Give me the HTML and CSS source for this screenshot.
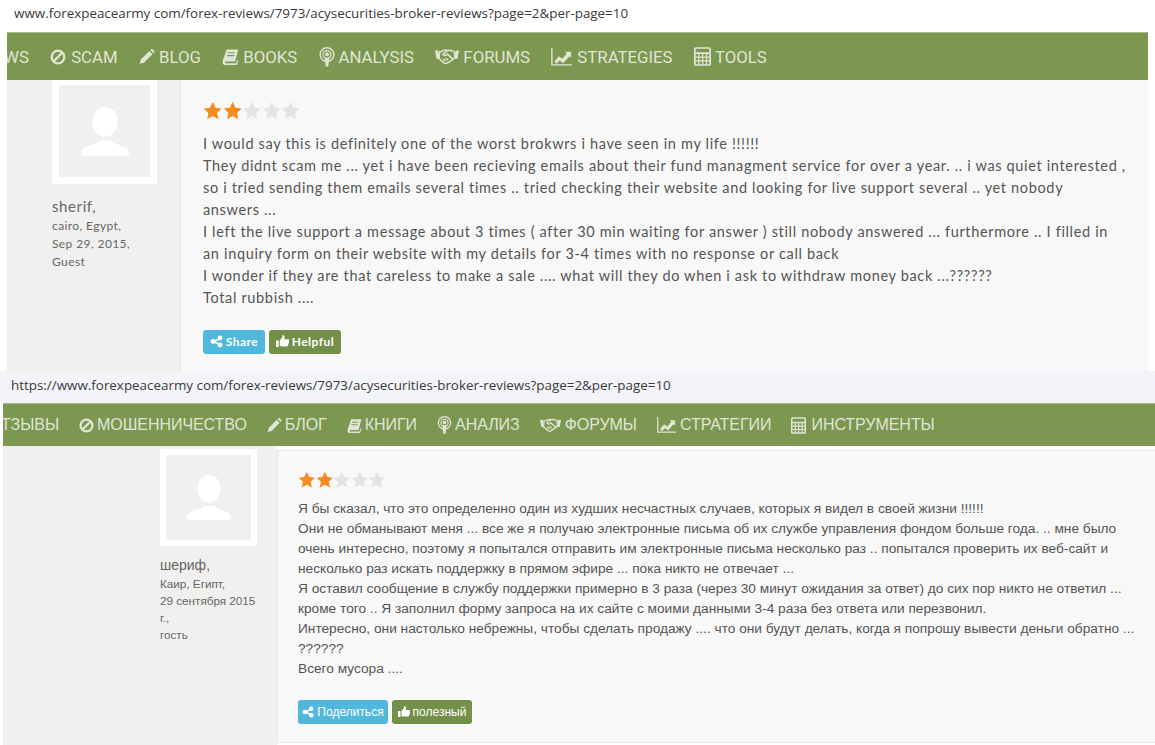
FILE: index.html
```html
<!DOCTYPE html>
<html lang="en">
<head>
  <meta charset="UTF-8" />
  <meta name="viewport" content="width=device-width, initial-scale=1.0"/>
  <title>Review screenshots</title>
  <link rel="stylesheet" href="styles.css">
</head>
<body>

  <!-- Icon set -->
  <svg class="icon-defs" width="0" height="0">
    <symbol id="i-ban" viewBox="0 0 24 24"><circle cx="12" cy="12" r="9.5" fill="none" stroke="currentColor" stroke-width="3.6"/><path d="M6 18 18 6" stroke="currentColor" stroke-width="3.6"/></symbol>
    <symbol id="i-pencil" viewBox="0 0 24 24"><path d="M1 23l1.6-6.4L15.5 3.7l4.8 4.8L7.4 21.4zM17 2.2l1.2-1.1c.6-.5 1.4-.5 2 0l2.700 2.700c.5.6.5 1.400 0 2L21.800 7z" fill="currentColor"/></symbol>
    <symbol id="i-book" viewBox="0 0 24 24"><path d="M6.500 2H23l-4.500 17H5.500c-1.500 0-1.500 2.500 0 2.500H20l1.500-5 1.500.8L21 24H4c-2.800 0-3.800-2.800-3-5.500zM8.500 6l-.4 1.500h10l.4-1.500zM7.300 10l-.4 1.500h10l.4-1.500z" fill="currentColor" fill-rule="evenodd"/></symbol>
    <symbol id="i-podcast" viewBox="0 0 20 25"><circle cx="10" cy="9.500" r="8.600" fill="none" stroke="currentColor" stroke-width="1.800"/><circle cx="10" cy="9.500" r="5" fill="none" stroke="currentColor" stroke-width="1.600"/><circle cx="10" cy="9" r="2.500" fill="currentColor"/><path d="M7.200 13h5.600l-1.200 11.500H8.400z" fill="currentColor"/></symbol>
    <symbol id="i-handshake" viewBox="0 0 32 22"><path d="M0 3h4.500l1.500 11H2zM27.500 3H32l-2 11h-4z" fill="currentColor"/><path d="M6 5c3 0 5-3 9-2.500L17 3c3-1 6 0 9 2l.5 8-9.500 6.500c-2 1.200-3.500 1-5 0L5.500 14z" fill="none" stroke="currentColor" stroke-width="2"/><path d="M16 3.500l-5.500 4.500c2 2.500 4 2 6-.2l7.500 6.700M14 17l-3-3M17.500 16l-3-3" fill="none" stroke="currentColor" stroke-width="2"/></symbol>
    <symbol id="i-chart" viewBox="0 0 24 20"><path d="M1 0v19h23" fill="none" stroke="currentColor" stroke-width="1.600"/><path d="M4 15l5-6 4 3 5-6-2-2h7v7l-2-2-7 8-4-3-4 4z" fill="currentColor"/></symbol>
    <symbol id="i-calc" viewBox="0 0 20 22"><path d="M2 0h16a2 2 0 0 1 2 2v18a2 2 0 0 1-2 2H2a2 2 0 0 1-2-2V2a2 2 0 0 1 2-2zM2 2v4h16V2zM2 8v3h3V8zm4.500 0v3h3V8zm4.500 0v3h3V8zm4.500 0v3H18V8zM2 12.500v3h3v-3zm4.500 0v3h3v-3zm4.500 0v3h3v-3zm4.500 0v3H18v-3zM2 17v3h3v-3zm4.500 0v3h3v-3zm4.500 0v3h3v-3zm4.500 0v3H18v-3z" fill="currentColor" fill-rule="evenodd"/></symbol>
    <symbol id="i-share" viewBox="0 0 24 24"><path d="M18 7 6 12l12 5" fill="none" stroke="currentColor" stroke-width="2.800"/><circle cx="18.500" cy="5.500" r="4.500" fill="currentColor"/><circle cx="5.500" cy="12" r="4.500" fill="currentColor"/><circle cx="18.500" cy="18.500" r="4.500" fill="currentColor"/></symbol>
    <symbol id="i-thumb" viewBox="0 0 24 24"><path d="M0 10h5v12H0zM7 10l4-5c1-1 1-3 1-5 3 0 4 2 4 4l-1 4h7c2 0 2.500 2 1.500 3 1 1 .8 2.800-.3 3.400.6 1.200.2 2.600-1 3.200.4 1.400-.4 3.400-2.200 3.400H11c-2 0-3-1-4-1z" fill="currentColor"/></symbol>
    <symbol id="i-star" viewBox="0 0 24 24"><path d="M12 1l3.400 7.300 7.600.9-5.600 5.400 1.500 7.900L12 18.600l-6.900 3.900 1.500-7.900L1 9.200l7.600-.9z" fill="currentColor"/></symbol>
    <symbol id="i-user" viewBox="0 0 52 52"><ellipse cx="26" cy="15.500" rx="13" ry="15.500" fill="currentColor"/><path d="M1 49c0-6 5-8 12-10 4-1 6-2 6-4h14c0 2 2 3 6 4 7 2 12 4 12 10 0 1-1 2-3 2H4c-2 0-3-1-3-2z" fill="currentColor"/></symbol>
  </svg>

  <!-- English page -->
  <section class="shot shot-en">
    <div class="url-bar">www.forexpeacearmy com/forex-reviews/7973/acysecurities-broker-reviews?page=2&amp;per-page=10</div>
    <nav class="menu">
      <a class="menu-item"><span class="cut">WS</span></a>
      <a class="menu-item"><svg class="ico ico-ban"><use href="#i-ban"/></svg>SCAM</a>
      <a class="menu-item"><svg class="ico ico-pencil"><use href="#i-pencil"/></svg>BLOG</a>
      <a class="menu-item"><svg class="ico ico-book"><use href="#i-book"/></svg>BOOKS</a>
      <a class="menu-item"><svg class="ico ico-podcast"><use href="#i-podcast"/></svg>ANALYSIS</a>
      <a class="menu-item"><svg class="ico ico-hand"><use href="#i-handshake"/></svg>FORUMS</a>
      <a class="menu-item"><svg class="ico ico-chart"><use href="#i-chart"/></svg>STRATEGIES</a>
      <a class="menu-item"><svg class="ico ico-calc"><use href="#i-calc"/></svg>TOOLS</a>
    </nav>
    <div class="review">
      <aside class="author">
        <div class="avatar"><svg class="avatar-img"><use href="#i-user"/></svg></div>
        <div class="author-name">sherif,</div>
        <div class="author-meta">cairo, Egypt,<br>Sep 29, 2015,<br>Guest</div>
      </aside>
      <div class="review-body">
        <div class="stars">
          <svg class="star on"><use href="#i-star"/></svg><svg class="star on"><use href="#i-star"/></svg><svg class="star"><use href="#i-star"/></svg><svg class="star"><use href="#i-star"/></svg><svg class="star"><use href="#i-star"/></svg>
        </div>
        <p class="review-text">I would say this is definitely one of the worst brokwrs i have seen in my life !!!!!!<br>
They didnt scam me ... yet i have been recieving emails about their fund managment service for over a year. .. i was quiet interested ,<br>
so i tried sending them emails several times .. tried checking their website and looking for live support several .. yet nobody<br>
answers ...<br>
I left the live support a message about 3 times ( after 30 min waiting for answer ) still nobody answered ... furthermore .. I filled in<br>
an inquiry form on their website with my details for 3-4 times with no response or call back<br>
I wonder if they are that careless to make a sale .... what will they do when i ask to withdraw money back ...??????<br>
Total rubbish ....</p>
        <div class="actions">
          <a class="btn btn-share"><svg class="btn-ico"><use href="#i-share"/></svg>Share</a>
          <a class="btn btn-help"><svg class="btn-ico"><use href="#i-thumb"/></svg>Helpful</a>
        </div>
      </div>
    </div>
  </section>

  <!-- Russian page -->
  <section class="shot shot-ru">
    <div class="url-bar">https://www.forexpeacearmy com/forex-reviews/7973/acysecurities-broker-reviews?page=2&amp;per-page=10</div>
    <nav class="menu">
      <a class="menu-item"><span class="cut">ТЗЫВЫ</span></a>
      <a class="menu-item"><svg class="ico ico-ban"><use href="#i-ban"/></svg>МОШЕННИЧЕСТВО</a>
      <a class="menu-item"><svg class="ico ico-pencil"><use href="#i-pencil"/></svg>БЛОГ</a>
      <a class="menu-item"><svg class="ico ico-book"><use href="#i-book"/></svg>КНИГИ</a>
      <a class="menu-item"><svg class="ico ico-podcast"><use href="#i-podcast"/></svg>АНАЛИЗ</a>
      <a class="menu-item"><svg class="ico ico-hand"><use href="#i-handshake"/></svg>ФОРУМЫ</a>
      <a class="menu-item"><svg class="ico ico-chart"><use href="#i-chart"/></svg>СТРАТЕГИИ</a>
      <a class="menu-item"><svg class="ico ico-calc"><use href="#i-calc"/></svg>ИНСТРУМЕНТЫ</a>
    </nav>
    <div class="review">
      <aside class="author">
        <div class="avatar"><svg class="avatar-img"><use href="#i-user"/></svg></div>
        <div class="author-name">шериф,</div>
        <div class="author-meta">Каир, Египт,<br>29 сентября 2015<br>г.,<br>гость</div>
      </aside>
      <div class="review-body">
        <div class="stars">
          <svg class="star on"><use href="#i-star"/></svg><svg class="star on"><use href="#i-star"/></svg><svg class="star"><use href="#i-star"/></svg><svg class="star"><use href="#i-star"/></svg><svg class="star"><use href="#i-star"/></svg>
        </div>
        <p class="review-text">Я бы сказал, что это определенно один из худших несчастных случаев, которых я видел в своей жизни !!!!!!<br>
Они не обманывают меня ... все же я получаю электронные письма об их службе управления фондом больше года. .. мне было<br>
очень интересно, поэтому я попытался отправить им электронные письма несколько раз .. попытался проверить их веб-сайт и<br>
несколько раз искать поддержку в прямом эфире ... пока никто не отвечает ...<br>
Я оставил сообщение в службу поддержки примерно в 3 раза (через 30 минут ожидания за ответ) до сих пор никто не ответил ...<br>
кроме того .. Я заполнил форму запроса на их сайте с моими данными 3-4 раза без ответа или перезвонил.<br>
Интересно, они настолько небрежны, чтобы сделать продажу .... что они будут делать, когда я попрошу вывести деньги обратно ...<br>
??????<br>
Всего мусора ....</p>
        <div class="actions">
          <a class="btn btn-share"><svg class="btn-ico"><use href="#i-share"/></svg>Поделиться</a>
          <a class="btn btn-help"><svg class="btn-ico"><use href="#i-thumb"/></svg>полезный</a>
        </div>
      </div>
    </div>
  </section>

</body>
</html>
```

FILE: styles.css
```css
html, body {
  margin: 0;
  padding: 0;
  background-color: white;
}

body {
  width: 1155px;
  height: 745px;
  overflow: hidden;
}

.icon-defs {
  display: block;
  height: 0;
}

.shot {
  overflow: hidden;
}

.url-bar {
  white-space: nowrap;
  color: #333;
}

.menu {
  display: flex;
  align-items: center;
  background-color: #7b9750;
  border-top: 1px solid #a8bb8f;
  box-sizing: border-box;
  overflow: hidden;
  color: #e0e5d6;
  white-space: nowrap;
}

.menu-item {
  display: flex;
  align-items: center;
  flex: none;
}

.ico {
  flex: none;
  fill: currentColor;
}

.review {
  display: flex;
}

.author {
  flex: none;
  box-sizing: border-box;
  background-color: #f1f0ee;
  color: #666;
}

.avatar {
  display: flex;
  align-items: center;
  justify-content: center;
  background-color: #f1f0ee;
  border-style: solid;
  border-color: white;
  box-sizing: border-box;
  color: white;
}

.review-body {
  flex: 1;
  background-color: #f8f8f8;
  box-sizing: border-box;
}

.stars {
  display: flex;
}

.star {
  color: #e3e4e4;
  flex: none;
}

.star.on {
  color: #f68b1f;
}

.review-text {
  margin: 0;
  white-space: nowrap;
  color: #555;
}

.actions {
  display: flex;
  gap: 4px;
}

.btn {
  display: flex;
  align-items: center;
  justify-content: center;
  height: 24px;
  box-sizing: border-box;
  border-radius: 3px;
  color: white;
  white-space: nowrap;
}

.btn-share {
  background-color: #4fb8dc;
}

.btn-help {
  background-color: #738f48;
}

.btn-ico {
  flex: none;
  fill: currentColor;
}

/* English shot */
.shot-en {
  height: 371px;
}

.shot-en .url-bar {
  height: 32px;
  padding: 4px 0 0 14px;
  box-sizing: border-box;
  font-family: "Open Sans", sans-serif;
  font-size: 13.400px;
  line-height: 18px;
  color: #3a3a3a;
}

.shot-en .menu,
.shot-en .review {
  margin: 0 7px;
}

.shot-en .menu {
  height: 48px;
  font-family: Roboto, sans-serif;
  font-size: 16.800px;
}

.shot-en .menu-item {
  margin-right: 21.300px;
}

.shot-en .cut {
  margin-left: -3px;
}

.shot-en .ico {
  margin-right: 4px;
}

.shot-en .ico-ban { width: 16px; height: 16px; margin-right: 5px; }
.shot-en .ico-pencil { width: 16px; height: 17px; }
.shot-en .ico-book { width: 17px; height: 17px; }
.shot-en .ico-podcast { width: 16px; height: 20px; }
.shot-en .ico-hand { width: 24px; height: 17px; }
.shot-en .ico-chart { width: 21px; height: 18px; margin-right: 5px; }
.shot-en .ico-calc { width: 17px; height: 19px; }

.shot-en .review {
  height: 291px;
}

.shot-en .author {
  width: 174px;
  padding-left: 45px;
  border-right: 1px solid #e6e6e6;
  font-family: Lato, sans-serif;
}

.shot-en .avatar {
  width: 105px;
  height: 104px;
  border-width: 5px 7px 7px;
}

.shot-en .avatar-img {
  width: 50px;
  height: 52px;
  margin-top: 1px;
}

.shot-en .author-name {
  margin-top: 13px;
  font-size: 15px;
  line-height: 18px;
  letter-spacing: 0.6px;
}

.shot-en .author-meta {
  margin-top: 2px;
  font-size: 12px;
  line-height: 18px;
  letter-spacing: 0.4px;
}

.shot-en .review-body {
  padding: 21px 0 0 22px;
}

.shot-en .star {
  width: 19.500px;
  height: 19.500px;
}

.shot-en .review-text {
  margin-top: 12px;
  font-family: Lato, sans-serif;
  font-size: 14.500px;
  line-height: 22px;
  letter-spacing: 0.660px;
}

.shot-en .actions {
  margin-top: 21px;
}

.shot-en .btn {
  font-family: Lato, sans-serif;
  font-size: 12px;
  font-weight: bold;
  letter-spacing: 0.5px;
}

.shot-en .btn-share { width: 62px; }
.shot-en .btn-help { width: 72px; }

.shot-en .btn-ico {
  width: 13px;
  height: 13px;
  margin-right: 3px;
}

/* Russian shot */
.shot-ru .url-bar {
  height: 32px;
  padding: 5px 0 0 11px;
  box-sizing: border-box;
  background-color: #f3f4f8;
  font-family: "Open Sans", sans-serif;
  font-size: 13.400px;
  line-height: 18px;
  color: #3a3a3a;
}

.shot-ru .menu,
.shot-ru .review {
  margin-left: 3px;
}

.shot-ru .menu {
  height: 43px;
  font-family: "Liberation Sans", sans-serif;
  font-size: 16px;
  letter-spacing: -0.050px;
}

.shot-ru .menu-item {
  margin-right: 20px;
}

.shot-ru .cut {
  margin-left: -2px;
}

.shot-ru .ico {
  margin-right: 3px;
}

.shot-ru .ico-ban { width: 15px; height: 15px; }
.shot-ru .ico-pencil { width: 15px; height: 16px; }
.shot-ru .ico-book { width: 15px; height: 15px; }
.shot-ru .ico-podcast { width: 15px; height: 18px; }
.shot-ru .ico-hand { width: 21px; height: 16px; margin-right: 4px; }
.shot-ru .ico-chart { width: 19px; height: 16px; margin-right: 4px; }
.shot-ru .ico-calc { width: 15px; height: 17px; margin-right: 5px; }

.shot-ru .review {
  height: 299px;
}

.shot-ru .author {
  width: 274px;
  padding: 3px 0 0 157px;
  font-family: "Liberation Sans", sans-serif;
}

.shot-ru .avatar {
  width: 97px;
  height: 97px;
  border-width: 6px;
}

.shot-ru .avatar-img {
  width: 46px;
  height: 46px;
}

.shot-ru .author-name {
  margin-top: 10px;
  font-size: 14px;
  line-height: 18px;
}

.shot-ru .author-meta {
  margin-top: 1px;
  font-size: 11.700px;
  line-height: 17px;
}

.shot-ru .review-body {
  margin-top: 4px;
  margin-bottom: 2px;
  padding: 20px 0 0 20px;
  border: 1px solid #e8e8e8;
  border-right: none;
}

.shot-ru .star {
  width: 17.600px;
  height: 17.600px;
}

.shot-ru .review-text {
  margin-top: 10px;
  font-family: "Liberation Sans", sans-serif;
  font-size: 13.700px;
  line-height: 20px;
}

.shot-ru .actions {
  margin-top: 21px;
}

.shot-ru .btn {
  font-family: "Liberation Sans", sans-serif;
  font-size: 12px;
}

.shot-ru .btn-share { width: 90px; }
.shot-ru .btn-help { width: 80px; }

.shot-ru .btn-ico {
  width: 12px;
  height: 12px;
  margin-right: 3px;
}
```
